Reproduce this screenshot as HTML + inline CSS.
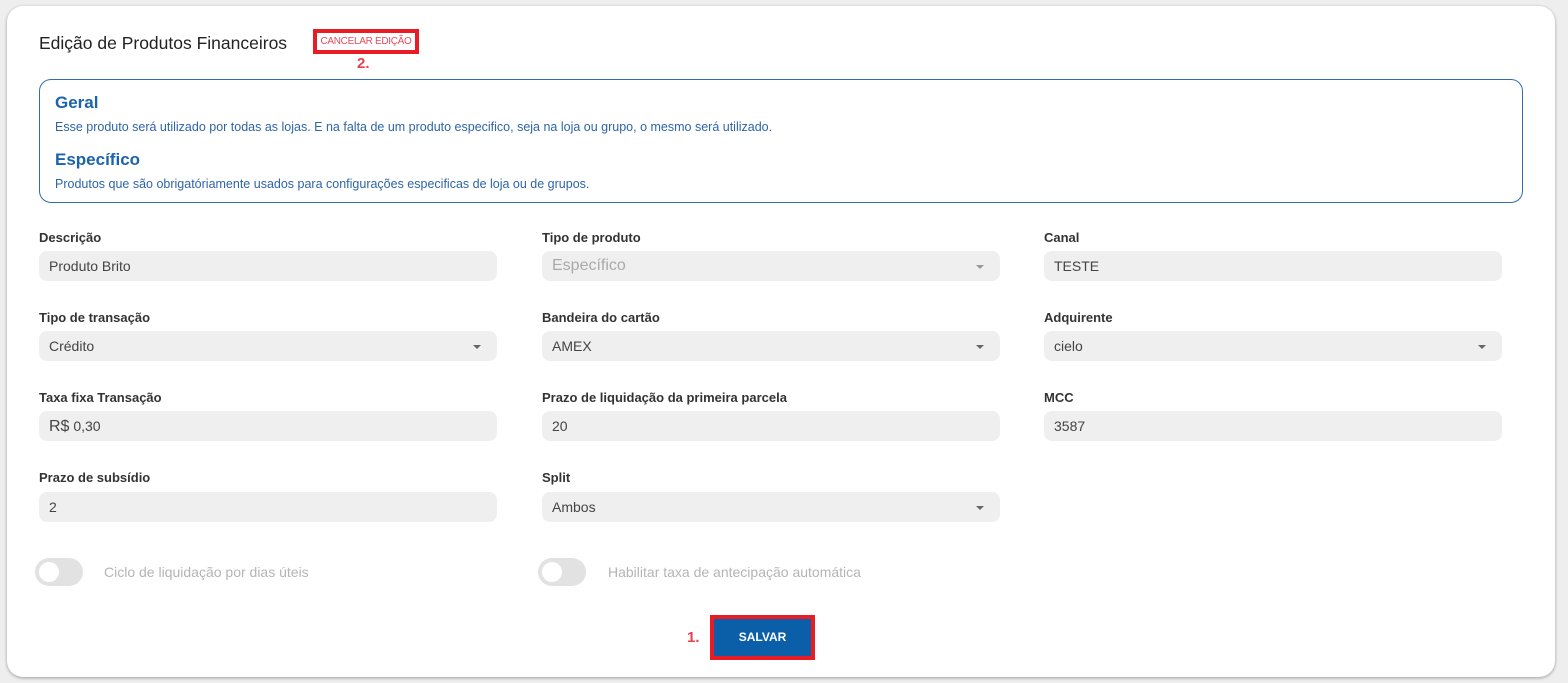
<!DOCTYPE html>
<html><head><meta charset="utf-8"><style>
*{box-sizing:border-box;margin:0;padding:0}
body{width:1568px;height:683px;background:#eeeeee;font-family:"Liberation Sans",sans-serif;position:relative;overflow:hidden}
.card{position:absolute;left:7px;top:6px;width:1548px;height:671px;background:#fff;border-radius:16px;box-shadow:0 1px 3px rgba(0,0,0,.35)}
.a{position:absolute;white-space:nowrap}
.title{left:39px;top:33px;font-size:17.5px;color:#222}
.cancel{left:313px;top:29px;width:106px;height:25px;border:4px solid #e81c24;font-size:10px;letter-spacing:-0.3px;color:#e84a5f;text-align:center;line-height:17px;background:#fff}
.n2{left:357px;top:55px;font-size:15px;font-weight:bold;color:#e8404f}
.info{left:39px;top:79px;width:1484px;height:124px;border:1px solid #2f6db0;border-radius:12px}
.h{font-size:17px;font-weight:bold;color:#1b63ab}
.p{font-size:12.5px;color:#2f64a8}
.lbl{font-size:13px;font-weight:bold;color:#333}
.inp{height:30px;width:458px;background:#efefef;border-radius:8px;font-size:14px;color:#444;padding-left:10px;line-height:30px}
.arr{position:absolute;right:16px;top:14px;width:0;height:0;border-left:4px solid transparent;border-right:4px solid transparent;border-top:4px solid #666}
.tg{width:48px;height:28px;border-radius:14px;background:#e2e2e2}
.tg::after{content:"";position:absolute;left:4px;top:4px;width:20px;height:20px;border-radius:50%;background:#fff}
.tl{font-size:14px;color:#b5b5b5}
</style></head><body>
<div class="card"></div>
<div class="a title">Edição de Produtos Financeiros</div>
<div class="a cancel">CANCELAR EDIÇÃO</div>
<div class="a n2">2.</div>
<div class="a info">
 <div class="a h" style="left:15px;top:13px">Geral</div>
 <div class="a p" style="left:15px;top:40px">Esse produto será utilizado por todas as lojas. E na falta de um produto especifico, seja na loja ou grupo, o mesmo será utilizado.</div>
 <div class="a h" style="left:15px;top:70px">Específico</div>
 <div class="a p" style="left:15px;top:97px">Produtos que são obrigatóriamente usados para configurações especificas de loja ou de grupos.</div>
</div>

<div class="a lbl" style="left:39px;top:230px">Descrição</div>
<div class="a inp" style="left:39px;top:251px">Produto Brito</div>
<div class="a lbl" style="left:542px;top:230px">Tipo de produto</div>
<div class="a inp" style="left:542px;top:251px;color:#aaa;font-size:16px">Específico<span class="arr" style="border-top-color:#999"></span></div>
<div class="a lbl" style="left:1044px;top:230px">Canal</div>
<div class="a inp" style="left:1044px;top:251px">TESTE</div>

<div class="a lbl" style="left:39px;top:310px">Tipo de transação</div>
<div class="a inp" style="left:39px;top:331px">Crédito<span class="arr"></span></div>
<div class="a lbl" style="left:542px;top:310px">Bandeira do cartão</div>
<div class="a inp" style="left:542px;top:331px">AMEX<span class="arr"></span></div>
<div class="a lbl" style="left:1044px;top:310px">Adquirente</div>
<div class="a inp" style="left:1044px;top:331px">cielo<span class="arr"></span></div>

<div class="a lbl" style="left:39px;top:390px">Taxa fixa Transação</div>
<div class="a inp" style="left:39px;top:411px"><span style="font-size:16px">R$</span> 0,30</div>
<div class="a lbl" style="left:542px;top:390px">Prazo de liquidação da primeira parcela</div>
<div class="a inp" style="left:542px;top:411px">20</div>
<div class="a lbl" style="left:1044px;top:390px">MCC</div>
<div class="a inp" style="left:1044px;top:411px">3587</div>

<div class="a lbl" style="left:39px;top:470px">Prazo de subsídio</div>
<div class="a inp" style="left:39px;top:492px">2</div>
<div class="a lbl" style="left:542px;top:470px">Split</div>
<div class="a inp" style="left:542px;top:492px">Ambos<span class="arr"></span></div>

<div class="a tg" style="left:35px;top:558px"></div>
<div class="a tl" style="left:104px;top:564px">Ciclo de liquidação por dias úteis</div>
<div class="a tg" style="left:538px;top:558px"></div>
<div class="a tl" style="left:608px;top:564px">Habilitar taxa de antecipação automática</div>

<div class="a" style="left:687px;top:629px;font-size:15px;font-weight:bold;color:#e8404f">1.</div>
<div class="a" style="left:710px;top:615px;width:105px;height:45px;border:4px solid #e81c24;background:#0b5ea8;color:#fff;font-size:12px;font-weight:bold;text-align:center;line-height:37px">SALVAR</div>
</body></html>
